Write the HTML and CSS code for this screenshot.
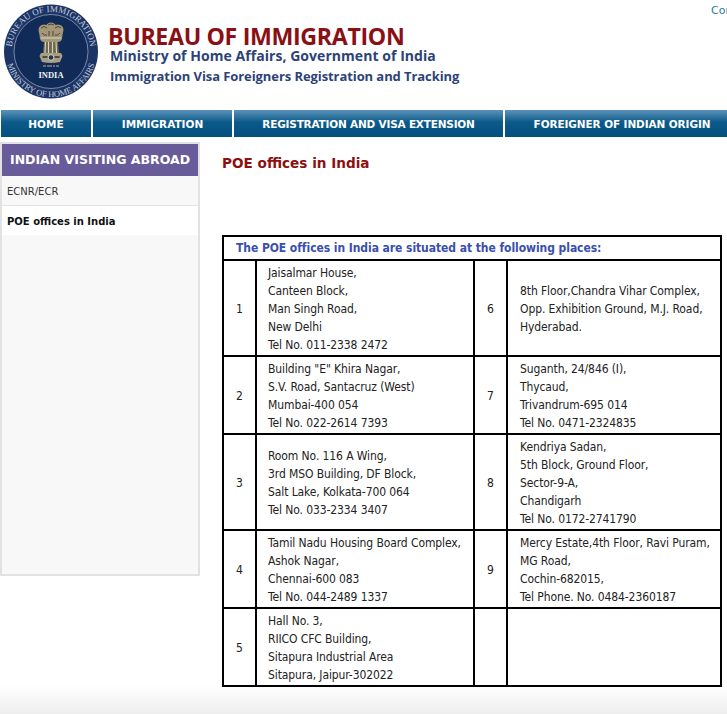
FILE: index.html
```html
<!DOCTYPE html>
<html lang="en">
<head>
    <meta charset="UTF-8">
    <meta name="viewport" content="width=device-width, initial-scale=1.0">
    <title>POE offices in India</title>
    <link rel="stylesheet" href="styles.css">
</head>
<body>
    <header class="site-header">
        <svg class="logo" width="108" height="104" viewBox="0 0 108 104">
            <defs>
                <path id="arc-top" d="M16.800 71.250 A39.500 39.500 0 1 1 85.200 71.250"/>
                <path id="arc-bottom" d="M5.500 51.500 A45.500 45.500 0 0 0 96.500 51.500"/>
            </defs>
            <circle cx="51" cy="51.500" r="47" fill="#1c3566"/>
            <circle cx="51" cy="51.500" r="37" fill="#112b59" stroke="#93a0b8" stroke-width="0.8"/>
            <text class="logo-ring"><textPath href="#arc-top" startOffset="50%" text-anchor="middle">BUREAU OF IMMIGRATION</textPath></text>
            <text class="logo-ring logo-ring-low"><textPath href="#arc-bottom" startOffset="50%" text-anchor="middle">MINISTRY OF HOME AFFAIRS</textPath></text>
            <!-- emblem: lions, pillar, wheel band -->
            <g fill="#a3977a">
                <circle cx="44" cy="30" r="5.500"/>
                <circle cx="51" cy="28" r="5.500"/>
                <circle cx="58" cy="30" r="5.500"/>
                <path d="M39 31 h24 l-1 8 q-1 3 -4 3 h-14 q-3 0 -4 -3z"/>
            </g>
            <path d="M41 28 q3 -3 6 0 m1 -3 q3 -2 6 0 m1 3 q3 -3 6 0 M42 33 q2 3 5 2 m2 -4 v5 m4 -5 v5 m2 -1 q3 1 5 -2" stroke="#50472f" stroke-width="1" fill="none"/>
            <path d="M41 38 h20" stroke="#d9d3bb" stroke-width="1"/>
            <path d="M44 42 h14 l1 11 h-16z" fill="#6f6850"/>
            <path d="M45.500 42 l-.5 11 m3.500 -11 v11 m4 -11 v11 m3.500 -11 l.5 11" stroke="#dcd7c2" stroke-width="1.100" fill="none"/>
            <path d="M41 53 h20 l1.500 3 -2.500 6 q-9 2 -18 0 l-2.500 -6z" fill="#a89e82"/>
            <circle cx="51" cy="57.500" r="2.800" fill="#26344d" stroke="#ebe6d2" stroke-width="0.8"/>
            <path d="M42.500 57 h5 m7 0 h5" stroke="#2f3138" stroke-width="1.600"/>
            <path d="M43 66 h3 m1 0 h5 m1 0 h2 m1 0 h3" stroke="#b9b39a" stroke-width="1.100"/>
            <text class="logo-india" x="51" y="78" text-anchor="middle">INDIA</text>
        </svg>
        <div class="header-text">
            <h1 class="site-title">BUREAU OF IMMIGRATION</h1>
            <p class="site-ministry">Ministry of Home Affairs, Government of India</p>
            <p class="site-tagline">Immigration Visa Foreigners Registration and Tracking</p>
        </div>
        <a class="top-link" href="#">Contact Us</a>
    </header>

    <nav class="main-nav">
        <a class="nav-item nav-home" href="#">HOME</a>
        <a class="nav-item nav-immigration" href="#">IMMIGRATION</a>
        <a class="nav-item nav-registration" href="#">REGISTRATION AND VISA EXTENSION</a>
        <a class="nav-item nav-foreigner" href="#">FOREIGNER OF INDIAN ORIGIN</a>
    </nav>

    <div class="page-body">
        <aside class="sidebar">
            <h2 class="sidebar-title">INDIAN VISITING ABROAD</h2>
            <a class="sidebar-link" href="#">ECNR/ECR</a>
            <a class="sidebar-link active" href="#">POE offices in India</a>
        </aside>

        <main class="content">
            <h2 class="content-title">POE offices in India</h2>
            <table class="poe-table">
                <colgroup>
                    <col class="col-num">
                    <col class="col-left">
                    <col class="col-num2">
                    <col>
                </colgroup>
                <tr>
                    <th colspan="4">The POE offices in India are situated at the following places:</th>
                </tr>
                <tr>
                    <td class="num">1</td>
                    <td>Jaisalmar House,<br>Canteen Block,<br>Man Singh Road,<br>New Delhi<br>Tel No. 011-2338 2472</td>
                    <td class="num">6</td>
                    <td class="right">8th Floor,Chandra Vihar Complex,<br>Opp. Exhibition Ground, M.J. Road,<br>Hyderabad.</td>
                </tr>
                <tr>
                    <td class="num">2</td>
                    <td>Building "E" Khira Nagar,<br>S.V. Road, Santacruz (West)<br>Mumbai-400 054<br>Tel No. 022-2614 7393</td>
                    <td class="num">7</td>
                    <td class="right">Suganth, 24/846 (I),<br>Thycaud,<br>Trivandrum-695 014<br>Tel No. 0471-2324835</td>
                </tr>
                <tr>
                    <td class="num">3</td>
                    <td>Room No. 116 A Wing,<br>3rd MSO Building, DF Block,<br>Salt Lake, Kolkata-700 064<br>Tel No. 033-2334 3407</td>
                    <td class="num">8</td>
                    <td class="right">Kendriya Sadan,<br>5th Block, Ground Floor,<br>Sector-9-A,<br>Chandigarh<br>Tel No. 0172-2741790</td>
                </tr>
                <tr>
                    <td class="num">4</td>
                    <td>Tamil Nadu Housing Board Complex,<br>Ashok Nagar,<br>Chennai-600 083<br>Tel No. 044-2489 1337</td>
                    <td class="num">9</td>
                    <td class="right">Mercy Estate,4th Floor, Ravi Puram,<br>MG Road,<br>Cochin-682015,<br>Tel Phone. No. 0484-2360187</td>
                </tr>
                <tr>
                    <td class="num">5</td>
                    <td>Hall No. 3,<br>RIICO CFC Building,<br>Sitapura Industrial Area<br>Sitapura, Jaipur-302022</td>
                    <td class="num"></td>
                    <td class="right"></td>
                </tr>
            </table>
        </main>
    </div>

    <footer class="site-footer"></footer>
</body>
</html>
```

FILE: styles.css
```css
* {
    margin: 0;
    padding: 0;
    box-sizing: border-box;
}

html, body {
    height: 714px;
    overflow: hidden;
}

body {
    font-family: "DejaVu Sans", Verdana, sans-serif;
    font-size: 12px;
    color: #222;
    background: #fff;
}

a {
    text-decoration: none;
}

.site-header {
    display: flex;
    height: 110px;
    overflow: hidden;
}

.logo {
    flex: 0 0 108px;
}

.logo-ring {
    font-family: "Liberation Serif", serif;
    font-size: 9px;
    fill: #c3cbdb;
}

.logo-ring-low {
    font-size: 8.500px;
}

.logo-india {
    font-family: "Liberation Serif", serif;
    font-size: 8.500px;
    font-weight: bold;
    fill: #f2f2f2;
}

.header-text {
    flex: 0 0 603px;
    padding-top: 23px;
}

.site-title {
    font-family: "Open Sans", sans-serif;
    font-size: 23.200px;
    font-weight: 700;
    line-height: 26px;
    letter-spacing: -0.35px;
    color: #8a1014;
}

.site-ministry {
    font-family: "Open Sans", sans-serif;
    font-size: 14px;
    font-weight: 700;
    line-height: 14px;
    letter-spacing: 0.05px;
    padding-left: 2px;
    color: #2c4377;
}

.site-tagline {
    font-family: "Open Sans", sans-serif;
    font-size: 13px;
    font-weight: 700;
    line-height: 26px;
    letter-spacing: -0.08px;
    padding-left: 2px;
    color: #2c4377;
}

.top-link {
    flex-shrink: 0;
    padding-top: 4px;
    font-size: 11px;
    white-space: nowrap;
    color: #1f7d9d;
}

.main-nav {
    display: flex;
    gap: 2px;
    height: 27px;
    padding-left: 1px;
}

.nav-item {
    display: flex;
    align-items: center;
    justify-content: center;
    font-size: 10.500px;
    font-weight: bold;
    color: #fff;
    background: linear-gradient(#5b93b8, #0c5a8a 45%, #03507f);
}

.nav-home { width: 90px; }
.nav-immigration { width: 139px; }
.nav-registration { width: 269px; letter-spacing: -0.2px; }
.nav-foreigner { flex: 1; padding-left: 12px; letter-spacing: -0.1px; }

.page-body {
    display: flex;
    align-items: flex-start;
    height: 548px;
    padding-top: 5px;
}

.sidebar {
    width: 200px;
    height: 434px;
    border: 2px solid #e2e2e2;
    background: #f8f8f8;
}

.sidebar-title {
    height: 32px;
    line-height: 32px;
    font-size: 12.500px;
    font-weight: bold;
    text-align: center;
    color: #fff;
    background: #675c99;
}

.sidebar-link {
    display: block;
    height: 30px;
    padding-top: 1px;
    line-height: 30px;
    padding-left: 5px;
    font-size: 10px;
    color: #333;
    border-bottom: 1px solid #e4e4e4;
}

.sidebar-link.active {
    height: 29px;
    font-weight: bold;
    color: #111;
    background: #fff;
    border-bottom: 0;
}

.content {
    position: relative;
    width: 500px;
    margin-left: 22px;
}

.content-title {
    height: 93px;
    padding-top: 13px;
    font-size: 13.600px;
    font-weight: bold;
    color: #8c1010;
}

.poe-table {
    width: 500px;
    table-layout: fixed;
    border-collapse: collapse;
    border: 2px solid #000;
    font-family: "DejaVu Sans", sans-serif;
    font-stretch: condensed;
}

.col-num { width: 33px; }
.col-left { width: 218px; }
.col-num2 { width: 33px; }

.poe-table th {
    height: 24px;
    padding-left: 12px;
    font-size: 12px;
    font-weight: bold;
    text-align: left;
    letter-spacing: -0.06px;
    color: #3a4fae;
    border: 2px solid #000;
}

.poe-table td {
    padding: 3px 0 1px 11px;
    font-size: 12px;
    line-height: 18px;
    vertical-align: middle;
    white-space: nowrap;
    letter-spacing: -0.1px;
    border: 2px solid #000;
}

.poe-table td.right {
    padding-left: 12px;
}

.poe-table td.num {
    padding: 2px 0 0;
    text-align: center;
}

.site-footer {
    height: 29px;
    background: linear-gradient(#fff, #eeeeee);
}
```
